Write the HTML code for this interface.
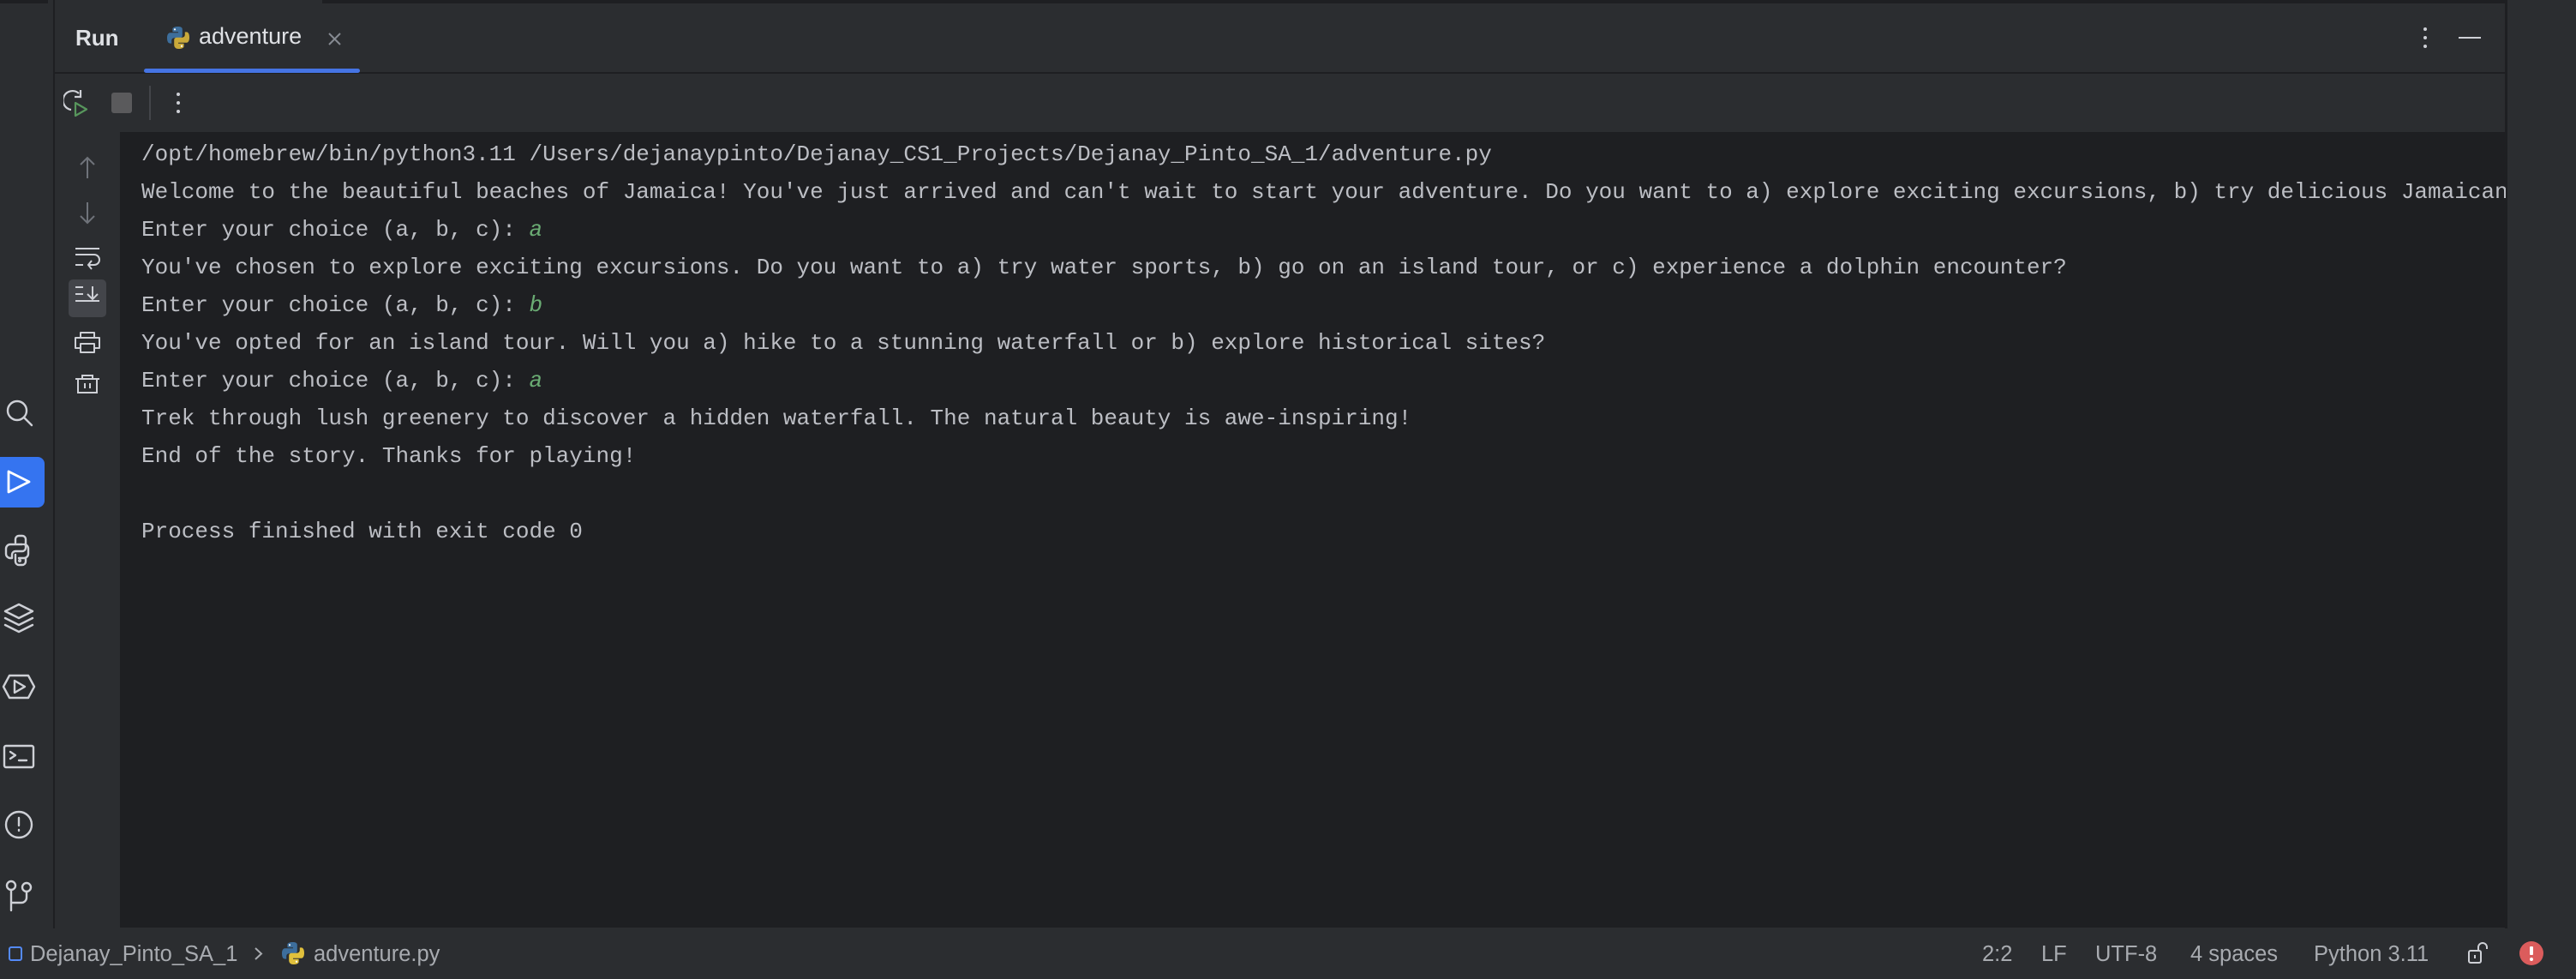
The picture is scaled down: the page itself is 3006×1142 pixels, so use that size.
<!DOCTYPE html>
<html><head><meta charset="utf-8"><style>
*{margin:0;padding:0;box-sizing:border-box}
body{width:3006px;height:1142px;background:#2b2d30;position:relative;overflow:hidden;font-family:"Liberation Sans",sans-serif}
.a{position:absolute}
.console{position:absolute;left:140px;top:154px;width:2784px;height:928px;background:#1e1f22;overflow:hidden}
.txt{position:absolute;left:25px;top:4px;font-family:"Liberation Mono",monospace;font-size:26px;line-height:44px;color:#bcbec4;white-space:pre}
.in{color:#6aab73;font-style:italic}
.st{position:absolute;top:1097px;font-size:25.5px;color:#a8abb0;line-height:32px}
</style></head><body>
<div class="a" style="left:0;top:0;width:3006px;height:4px;background:#1e1f22"></div>
<div class="a" style="left:56px;top:0;width:320px;height:4px;background:#2b2d30"></div>
<div class="a" style="left:62px;top:0;width:2px;height:1083px;background:#1e1f22"></div>
<div class="a" style="left:2923px;top:0;width:3px;height:1083px;background:#1e1f22"></div>
<div class="a" style="left:2926px;top:0;width:80px;height:1083px;background:#2b2d30"></div>
<div class="a" style="left:64px;top:84px;width:2859px;height:2px;background:#1e1f22"></div>
<div class="a" style="left:88px;top:29px;font-size:26px;font-weight:bold;color:#dfe1e5">Run</div>
<svg class="a" style="left:194px;top:30px" width="28" height="28" viewBox="0 0 28 28"><path d="M13.8 1C7 1 7.4 4 7.4 4v3.2h6.6v1H4.7S1 7.8 1 14.3s3.2 6.3 3.2 6.3h2v-3s-.1-3.3 3.2-3.3h6.3s3.1 0 3.1-3V4.2S19.3 1 13.8 1z" fill="#3d6e9c"/><path d="M14.2 27c6.8 0 6.4-3 6.4-3v-3.2H14v-1h9.3s3.7.4 3.7-6.1-3.2-6.3-3.2-6.3h-2v3s.1 3.3-3.2 3.3h-6.3s-3.1 0-3.1 3v5.1S8.7 27 14.2 27z" fill="#c9a93a"/><circle cx="10" cy="4.3" r="1.1" fill="#fff"/><circle cx="18" cy="23.7" r="1.1" fill="#fff"/></svg>
<div class="a" style="left:232px;top:27px;font-size:27px;color:#dfe1e5">adventure</div>
<svg class="a" style="left:383px;top:38px" width="15" height="15"><path d="M1 1L14 14M14 1L1 14" stroke="#868a91" stroke-width="2"/></svg>
<div class="a" style="left:168px;top:80px;width:252px;height:5px;border-radius:3px;background:#4574e4"></div>
<div class="a" style="left:2828px;top:32px;width:4px;height:4px;border-radius:2px;background:#ced0d6"></div>
<div class="a" style="left:2828px;top:42px;width:4px;height:4px;border-radius:2px;background:#ced0d6"></div>
<div class="a" style="left:2828px;top:52px;width:4px;height:4px;border-radius:2px;background:#ced0d6"></div>
<div class="a" style="left:2869px;top:43px;width:26px;height:2px;background:#ced0d6"></div>
<svg class="a" style="left:74px;top:104px" width="36" height="36" viewBox="0 0 36 36"><path d="M18 5A11 11 0 1 0 9 24" fill="none" stroke="#ced0d6" stroke-width="2.2"/><path d="M18 1v8h-7" fill="none" stroke="#ced0d6" stroke-width="2.2" transform="translate(2 0)"/><path d="M14 16l13 7.5-13 7.5z" fill="none" stroke="#57965c" stroke-width="2.2" stroke-linejoin="round"/></svg>
<div class="a" style="left:130px;top:108px;width:24px;height:24px;border-radius:3px;background:#5a5a5c"></div>
<div class="a" style="left:174px;top:100px;width:2px;height:40px;background:#43454a"></div>
<div class="a" style="left:206px;top:108px;width:4px;height:4px;border-radius:2px;background:#ced0d6"></div>
<div class="a" style="left:206px;top:118px;width:4px;height:4px;border-radius:2px;background:#ced0d6"></div>
<div class="a" style="left:206px;top:128px;width:4px;height:4px;border-radius:2px;background:#ced0d6"></div>
<svg class="a" style="left:64px;top:154px" width="76" height="330" viewBox="0 0 76 330">
<g fill="none" stroke="#6f737a" stroke-width="2"><path d="M38 30v24M30 38l8-8 8 8"/><path d="M38 82v24M30 98l8 8 8-8"/></g>
<g fill="none" stroke="#ced0d6" stroke-width="2"><path d="M24 136h28M24 143h22a6 6 0 0 1 0 12h-6M43 150l-4 5 4 5M24 155h9"/></g>
<rect x="16" y="172" width="44" height="44" rx="5" fill="#43454a"/>
<g fill="none" stroke="#ced0d6" stroke-width="2"><path d="M24 181h9M24 189h9M24 197h28M44 180v15M38 189l6 6 6-6"/></g>
<g fill="none" stroke="#ced0d6" stroke-width="2" stroke-linejoin="round"><path d="M30 240v-6h16v6"/><path d="M30 252h-6v-12h28v12h-6"/><path d="M30 247h16v10H30z"/></g>
<g fill="none" stroke="#ced0d6" stroke-width="2"><path d="M24 288h28M32 288v-4h12v4M27 288v16h22v-16M35 293v6M41 293v6"/></g>
</svg>
<div class="console"><div class="txt">/opt/homebrew/bin/python3.11 /Users/dejanaypinto/Dejanay_CS1_Projects/Dejanay_Pinto_SA_1/adventure.py
Welcome to the beautiful beaches of Jamaica! You've just arrived and can't wait to start your adventure. Do you want to a) explore exciting excursions, b) try delicious Jamaican cuisine, or c) relax on the beach?
Enter your choice (a, b, c): <span class="in">a</span>
You've chosen to explore exciting excursions. Do you want to a) try water sports, b) go on an island tour, or c) experience a dolphin encounter?
Enter your choice (a, b, c): <span class="in">b</span>
You've opted for an island tour. Will you a) hike to a stunning waterfall or b) explore historical sites?
Enter your choice (a, b, c): <span class="in">a</span>
Trek through lush greenery to discover a hidden waterfall. The natural beauty is awe-inspiring!
End of the story. Thanks for playing!

Process finished with exit code 0</div></div>
<div class="a" style="left:0;top:533px;width:52px;height:59px;border-radius:0 8px 8px 0;background:#3574f0"></div>
<svg class="a" style="left:0;top:0" width="62" height="1083" viewBox="0 0 62 1083">
<g fill="none" stroke="#ced0d6" stroke-width="2.4" stroke-linejoin="round" stroke-linecap="round">
<g transform="translate(22 481)"><circle cx="-2" cy="-2" r="11"/><path d="M6 6l9 9"/></g>
<g transform="translate(22 562)"><path d="M-12 -12v24l24-12z" stroke="#fff" stroke-width="2.8"/></g>
<g transform="translate(22 642)"><path d="M-4 -9v-4a4 4 0 0 1 4-4h4a4 4 0 0 1 4 4v10a4 4 0 0 1-4 4h-8a4 4 0 0 0-4 4v4h-2a5 5 0 0 1-5-5v-6a5 5 0 0 1 5-5h14"/><path d="M4 9h2a5 5 0 0 0 5-5v-6a5 5 0 0 0-5-5M-4 5v8a4 4 0 0 0 4 4h4a4 4 0 0 0 4-4v-4H0"/><circle cx="1" cy="12" r="0.8"/></g>
<g transform="translate(22 721)"><path d="M-16 -8l16-8 16 8-16 8zM-16 0l16 8 16-8M-16 8l16 8 16-8"/></g>
<g transform="translate(22 801)"><path d="M-18 0l7-13h22l7 13-7 13h-22z"/><path d="M-5 -7v14l12-7z"/></g>
<g transform="translate(22 882)"><rect x="-17" y="-12" width="34" height="25" rx="2"/><path d="M-10 -5l6 4-6 4M0 5h9"/></g>
<g transform="translate(22 962)"><circle cx="0" cy="0" r="15"/><path d="M0 -8v9M0 6v1"/></g>
<g transform="translate(22 1041)"><circle cx="-9" cy="-8" r="5"/><circle cx="9" cy="-6" r="5"/><path d="M-9 -3v24M-9 12h12a6 6 0 0 0 6-6v-7"/></g>
</g></svg>
<div class="a" style="left:10px;top:1104px;width:16px;height:17px;border:2px solid #548af7;border-radius:3px"></div>
<div class="st" style="left:35px">Dejanay_Pinto_SA_1</div>
<svg class="a" style="left:296px;top:1104px" width="12" height="17"><path d="M2 2l7 6.5L2 15" fill="none" stroke="#a8abb0" stroke-width="2"/></svg>
<svg class="a" style="left:328px;top:1098px" width="28" height="28" viewBox="0 0 28 28"><path d="M13.8 1C7 1 7.4 4 7.4 4v3.2h6.6v1H4.7S1 7.8 1 14.3s3.2 6.3 3.2 6.3h2v-3s-.1-3.3 3.2-3.3h6.3s3.1 0 3.1-3V4.2S19.3 1 13.8 1z" fill="#3d6e9c"/><path d="M14.2 27c6.8 0 6.4-3 6.4-3v-3.2H14v-1h9.3s3.7.4 3.7-6.1-3.2-6.3-3.2-6.3h-2v3s.1 3.3-3.2 3.3h-6.3s-3.1 0-3.1 3v5.1S8.7 27 14.2 27z" fill="#e0c03c"/><circle cx="10" cy="4.3" r="1.1" fill="#fff"/><circle cx="18" cy="23.7" r="1.1" fill="#fff"/></svg>
<div class="st" style="left:366px">adventure.py</div>
<div class="st" style="left:2313px">2:2</div>
<div class="st" style="left:2382px">LF</div>
<div class="st" style="left:2445px">UTF-8</div>
<div class="st" style="left:2556px">4 spaces</div>
<div class="st" style="left:2700px">Python 3.11</div>
<svg class="a" style="left:2879px;top:1099px" width="28" height="26"><g fill="none" stroke="#ced0d6" stroke-width="2"><rect x="2" y="10" width="14" height="14" rx="2"/><path d="M13 10V6a5 5 0 0 1 10 0v2M9 15v4"/></g></svg>
<div class="a" style="left:2940px;top:1098px;width:28px;height:28px;border-radius:14px;background:#db5c5c"></div>
<div class="a" style="left:2952px;top:1104px;width:4px;height:10px;background:#fff;border-radius:1px"></div>
<div class="a" style="left:2952px;top:1117px;width:4px;height:4px;background:#fff;border-radius:2px"></div>
</body></html>
